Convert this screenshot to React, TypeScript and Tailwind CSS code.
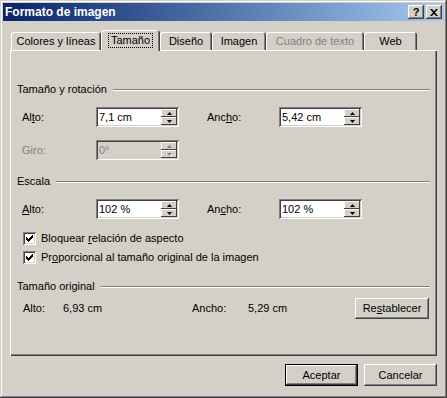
import React from 'react';

const raised = 'shadow-[inset_-1px_-1px_#404040,inset_1px_1px_#ffffff,inset_-2px_-2px_#808080,inset_2px_2px_#d4d0c8]';
const sunken = 'shadow-[inset_1px_1px_#808080,inset_-1px_-1px_#ffffff,inset_2px_2px_#404040,inset_-2px_-2px_#d4d0c8]';

function Arrow({ up, disabled }: { up?: boolean; disabled?: boolean }) {
    const d = up ? 'M0 3 L2.5 0 L5 3 Z' : 'M0 0 L5 0 L2.5 3 Z';
    return (
        <svg width="5" height="3" viewBox="0 0 5 3" className="block">
            {disabled && <path d={d} fill="#ffffff" transform="translate(1 1)" />}
            <path d={d} fill={disabled ? '#808080' : '#000000'} />
        </svg>
    );
}

function SpinBox({ value, disabled }: { value: string; disabled?: boolean }) {
    return (
        <div className={`flex h-[20px] w-[83px] p-[2px] ${sunken} ${disabled ? 'bg-[#d4d0c8]' : 'bg-white'}`}>
            <div className={`flex-1 pl-[1px] leading-[16px] ${disabled ? 'text-[#808080]' : 'text-black'}`}>{value}</div>
            <div className="flex w-[16px] flex-col">
                <div className="flex h-[8px] items-center justify-center bg-[#d4d0c8] shadow-[inset_-1px_-1px_#404040,inset_1px_1px_#ffffff]">
                    <Arrow up disabled={disabled} />
                </div>
                <div className="flex h-[8px] items-center justify-center bg-[#d4d0c8] shadow-[inset_-1px_-1px_#404040,inset_1px_1px_#ffffff]">
                    <Arrow disabled={disabled} />
                </div>
            </div>
        </div>
    );
}

function GroupHeader({ title }: { title: string }) {
    return (
        <div className="flex h-[13px] items-center pl-[7px] pr-[7px]">
            <span className="leading-[13px]">{title}</span>
            <div className="ml-[6px] h-[2px] flex-1 border-t border-b border-t-[#808080] border-b-white" />
        </div>
    );
}

function CheckBox({ children }: { children: React.ReactNode }) {
    return (
        <div className="flex h-[13px] items-center pl-[13px]">
            <div className={`flex h-[13px] w-[13px] items-center justify-center bg-white ${sunken}`}>
                <svg width="7" height="7" viewBox="0 0 7 7" className="block">
                    <path d="M0 2h1v1h1v1h1v-1h1v-1h1v-1h1v-1h1v3h-1v1h-1v1h-1v1h-1v1h-1v-1h-1v-1h-1v-1h-1z" fill="#000" />
                </svg>
            </div>
            <span className="ml-[5px] leading-[13px]">{children}</span>
        </div>
    );
}

const tabs = [
    { label: 'Colores y líneas', w: 'w-[90px]' },
    { label: 'Tamaño', w: 'w-[59px]', active: true },
    { label: 'Diseño', w: 'w-[52px]' },
    { label: 'Imagen', w: 'w-[54px]' },
    { label: 'Cuadro de texto', w: 'w-[98px]', disabled: true },
    { label: 'Web', w: 'w-[53px]' },
];

export default function App() {
    return (
        <div
            className="flex h-[398px] w-[447px] flex-col bg-[#d4d0c8] p-[3px] text-[11px] text-black shadow-[inset_-1px_-1px_#404040,inset_1px_1px_#d4d0c8,inset_-2px_-2px_#808080,inset_2px_2px_#ffffff]"
            style={{ fontFamily: '"Liberation Sans", Arial, sans-serif' }}
        >
            {/* Title bar */}
            <div className="flex h-[18px] items-center bg-linear-to-r from-[#0a246a] to-[#a6caf0] pl-[2px] pr-[2px]">
                <span className="flex-1 text-[12px] font-bold leading-[18px] text-white">Formato de imagen</span>
                <div className={`flex h-[14px] w-[16px] items-center justify-center bg-[#d4d0c8] ${raised}`}>
                    <span className="text-[11px] font-bold leading-[11px]">?</span>
                </div>
                <div className={`ml-[2px] flex h-[14px] w-[16px] items-center justify-center bg-[#d4d0c8] ${raised}`}>
                    <svg width="8" height="7" viewBox="0 0 8 7" className="block">
                        <path d="M0 0h2l2 2.2L6 0h2L5 3.5L8 7H6L4 4.8L2 7H0l3-3.5z" fill="#000" />
                    </svg>
                </div>
            </div>

            {/* Tabs */}
            <div className="mt-[9px] flex h-[20px] items-end pl-[8px]">
                {tabs.map((t) =>
                    t.active ? (
                        <div
                            key={t.label}
                            className={`relative z-10 -mb-[1px] flex h-[21px] ${t.w} justify-center rounded-t-[3px] bg-[#d4d0c8] pt-[3px] shadow-[inset_1px_1px_#ffffff,inset_-1px_0_#404040,inset_-2px_0_#808080]`}
                        >
                            <span className="h-[15px] border border-dotted border-black px-[2px] leading-[13px]">{t.label}</span>
                        </div>
                    ) : (
                        <div
                            key={t.label}
                            className={`flex h-[18px] ${t.w} justify-center rounded-t-[3px] pt-[3px] leading-[13px] shadow-[inset_1px_1px_#ffffff,inset_-1px_0_#404040,inset_-2px_0_#808080] ${t.disabled ? 'text-[#808080]' : ''}`}
                        >
                            {t.label}
                        </div>
                    )
                )}
            </div>

            {/* Panel */}
            <div className="mx-[7px] flex h-[306px] flex-col pt-[33px] shadow-[inset_1px_1px_#ffffff,inset_-1px_-1px_#404040,inset_-2px_-2px_#808080]">
                <GroupHeader title="Tamaño y rotación" />
                <div className="mt-[11px] flex h-[20px] items-center pl-[12px]">
                    <span className="w-[74px]">Al<u>t</u>o:</span>
                    <SpinBox value="7,1 cm" />
                    <span className="ml-[28px] w-[72px]">Anc<u>h</u>o:</span>
                    <SpinBox value="5,42 cm" />
                </div>
                <div className="mt-[13px] flex h-[20px] items-center pl-[12px]">
                    <span className="w-[74px] text-[#808080]">Giro:</span>
                    <SpinBox value="0°" disabled />
                </div>

                <div className="mt-[15px]">
                    <GroupHeader title="Escala" />
                </div>
                <div className="mt-[11px] flex h-[20px] items-center pl-[12px]">
                    <span className="w-[74px]"><u>A</u>lto:</span>
                    <SpinBox value="102 %" />
                    <span className="ml-[28px] w-[72px]">An<u>c</u>ho:</span>
                    <SpinBox value="102 %" />
                </div>
                <div className="mt-[13px]">
                    <CheckBox>Bloquear <u>r</u>elación de aspecto</CheckBox>
                </div>
                <div className="mt-[6px]">
                    <CheckBox>Pr<u>o</u>porcional al tamaño original de la imagen</CheckBox>
                </div>

                <div className="mt-[16px]">
                    <GroupHeader title="Tamaño original" />
                </div>
                <div className="mt-[5px] flex h-[21px] items-center pl-[13px] pr-[8px]">
                    <span className="w-[40px]">Alto:</span>
                    <span className="w-[129px]">6,93 cm</span>
                    <span className="w-[56px]">Ancho:</span>
                    <span className="flex-1">5,29 cm</span>
                    <div className={`flex h-[21px] w-[74px] items-center justify-center bg-[#d4d0c8] ${raised}`}>
                        Re<u>s</u>tablecer
                    </div>
                </div>
            </div>

            {/* Buttons */}
            <div className="mt-[8px] flex justify-end gap-[6px] pr-[7px]">
                <div className="h-[22px] w-[73px] border border-black">
                    <div className={`flex h-full w-full items-center justify-center bg-[#d4d0c8] ${raised}`}>Aceptar</div>
                </div>
                <div className={`flex h-[22px] w-[73px] items-center justify-center bg-[#d4d0c8] ${raised}`}>Cancelar</div>
            </div>
        </div>
    );
}
